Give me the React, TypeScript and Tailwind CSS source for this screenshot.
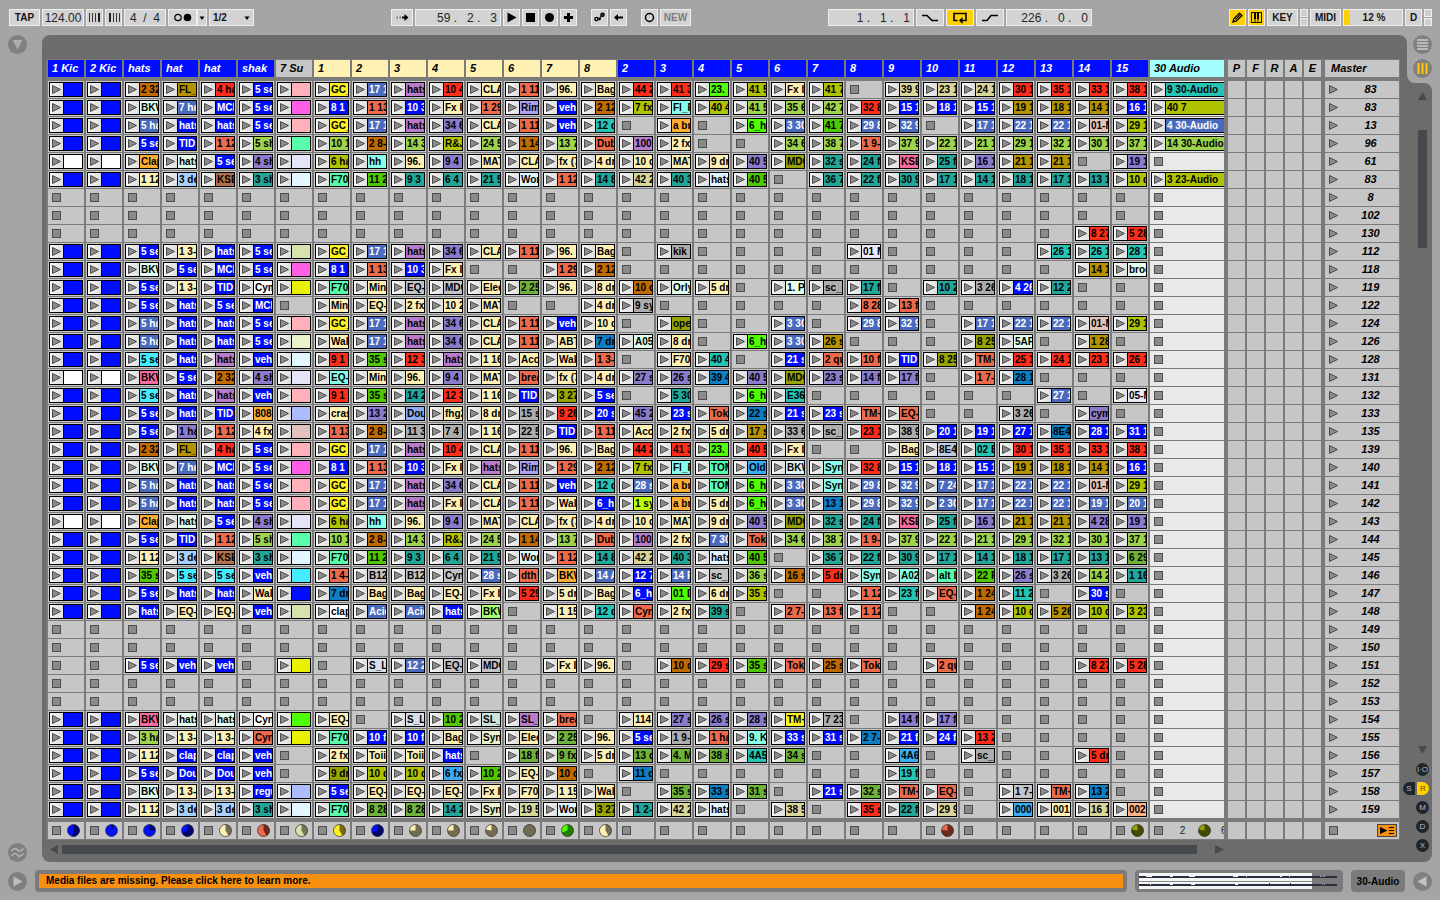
import React from "react";

const PALETTE: Record<string, string> = {
  bl: "bg-[#000dff] text-white",
  st: "bg-[#4a6bbd] text-white",
  or: "bg-[#bf6900] text-black",
  mu: "bg-[#b59200] text-black",
  re: "bg-[#ff2d19] text-black",
  mi: "bg-[#e3ffee] text-black",
  cm: "bg-[#ee6a4b] text-black",
  li: "bg-[#9dd44c] text-black",
  vi: "bg-[#8b7bcb] text-black",
  tl: "bg-[#22a699] text-black",
  cr: "bg-[#fff0b3] text-black",
  lb: "bg-[#a6d1ff] text-black",
  br: "bg-[#b0704a] text-black",
  am: "bg-[#ffae33] text-black",
  ye: "bg-[#fff01f] text-black",
  pu: "bg-[#b87cca] text-black",
  ol: "bg-[#b0c300] text-black",
  aq: "bg-[#87ffe9] text-black",
  gr: "bg-[#50c800] text-black",
  se: "bg-[#57ffad] text-black",
  pi: "bg-[#ffb0bb] text-black",
  mg: "bg-[#ff5fe4] text-black",
  lw: "bg-[#e4e6f8] text-black",
  lv: "bg-[#efe8fb] text-black",
  ic: "bg-[#e2f6ff] text-black",
  i2: "bg-[#dff0f2] text-black",
  tq: "bg-[#25c4b5] text-black",
  la: "bg-[#ad9ff0] text-black",
  dk: "bg-[#97a300] text-black",
  sa: "bg-[#d9d69c] text-black",
  gl: "bg-[#4dff00] text-black",
  gy: "bg-[#adadad] text-black",
  lg: "bg-[#c3c3c8] text-black",
  wh: "bg-white text-black",
  gn: "bg-[#6fb23a] text-black",
  hp: "bg-[#f76c9c] text-black",
  db: "bg-[#0d7dc4] text-black",
  rs: "bg-[#e1c3bb] text-black",
  yl: "bg-[#e8f200] text-black",
  pg: "bg-[#d7e3ad] text-black",
  p2: "bg-[#e8f3c9] text-black",
  pw: "bg-[#adbcff] text-black",
  cy: "bg-[#45ebff] text-black",
  du: "bg-[#8aacf0] text-black",
  sb: "bg-[#3aabf5] text-black",
  bg: "bg-[#bccbdf] text-black",
  yg: "bg-[#bfff0a] text-black",
  lm: "bg-[#a8ff70] text-black",
  ig: "bg-[#d5dfe8] text-black",
  sg: "bg-[#c9e3df] text-black",
  pe: "bg-[#ffb48a] text-black",
};

const EMPTY = Array(30).fill("-").join(",");

const SCENES: [string, string][] = [
  ["83", "bl,bl,or 2 32,mu FL_,re 4 ha,bl 5 se,pi,ye GC_,st 17 1,pu hats,re 10 4,cr CLA,cm 1 11,cr 96. I,cr Bag,re 44 2,re 41 3,gl 23. J,ol 41 5,cr Fx I,ol 41 7,-,sa 39 9,sa 23 1,sa 24 1,re 30 1,re 35 1,re 33 1,re 38 1,tq 9 30-Audio"],
  ["83", "bl,bl,mi BKW,st 7 ha,bl MCI,bl 5 se,mg,bl 8 1,cm 1 13,bl 10 3,cr Fx I,cm 1 29,la Rim,bl veh,or 2 12,ol 7 fx,aq Fl_F,ol 40 4,li 41 5,li 35 6,li 42 7,re 32 8,bl 15 1,bl 18 1,bl 15 1,mu 19 1,mu 18 1,mu 14 1,bl 16 1,ol 40 7"],
  ["13", "bl,bl,st 5 ha,bl hats,bl hats,bl 5 se,pi,ye GC_,st 17 1,pu hats,vi 34 6,cr CLA,cm 1 11,bl veh,tq 12 d,-,am a br,-,gl 6_h,st 3 30,gr 41 7,st 29 8,st 32 9,-,st 17 1,st 22 1,st 22 1,rs 01-M,ol 29 1,st 4 30-Audio"],
  ["96", "bl,bl,bl 5 se,bl TID,cm 1 12,li 5 sh,se,li 10 1,or 2 8-,li 14 3,ol R&J,li 24 5,or 1 14,li 13 7,cm Dub,pu 100,cr 2 fx,-,-,li 34 6,li 38 7,cm 1 9-,li 37 9,li 22 1,li 21 1,li 29 1,li 32 1,li 30 1,li 37 1,li 14 30-Audio"],
  ["61", "wh,wh,am Clap,mi hats,bl 5 se,vi 4 sh,lw,ol 6 ha,aq hh,cr 96.,vi 9 4,cr MAT,cr CLA,cr fx (7,cr 4 dr,cr 10 d,cr MAT,cr 9 dr,vi 40 5,dk MDC,tl 32 s,tl 24 f,hp KSE,tl 25 f,vi 16 1,mu 21 1,mu 21 1,-,vi 19 1,-"],
  ["83", "bl,bl,cr 1 12,lb 3 de,br KSE,tl 3 sh,ic,se F70,gr 11 2,tl 9 3,tl 6 4,tl 21 5,ic Wor,cm 1 12,tl 14 8,sa 42 2,tl 40 3,ic hats,gr 40 5,-,tl 36 7,tl 22 f,tl 30 9,tl 17 1,tl 14 1,tl 18 1,tl 17 1,tl 13 1,ol 10 d,ol 3 23-Audio"],
  ["8", EMPTY],
  ["102", EMPTY],
  ["130", "-,-,-,-,-,-,-,-,-,-,-,-,-,-,-,-,-,-,-,-,-,-,-,-,-,-,-,re 8 27,re 5 28,-"],
  ["112", "bl,bl,bl 5 se,cr 1 3-,bl hats,bl 5 se,pg,ye GC_,st 17 1,pu hats,vi 34 6,cr CLA,cm 1 11,cr 96. I,cr Bag,-,gy kik,-,-,-,-,lv 01 M,-,-,-,-,tq 26 1,tq 26 1,tq 28 1,-"],
  ["118", "bl,bl,mi BKW,bl 5 se,bl MCI,bl 5 se,mg,bl 8 1,cm 1 13,bl 10 3,cr Fx I,-,-,cm 1 29,or 2 12,-,-,-,-,-,-,-,-,-,-,-,-,mu 14 1,mi broo,-"],
  ["119", "bl,bl,bl 5 se,cr 1 3-,bl TID,wh Cym,yl,se F70,cr Min,lg EQ-,lg MDC,cr Elec,gn 2 25,cr 96. I,cr 8 dr,or 10 d,mi Orly,cr 5 dr,-,mi 1. P,gy sc_,tl 17 f,-,tl 10 2,gy 3 26,bl 4 26,tl 12 2,-,-,-"],
  ["122", "bl,bl,bl 5 se,bl hats,bl 5 se,bl MCI,-,cr Min,cr EQ-,cr 2 fx,cr 10 2,cr MAT,-,-,cr 4 dr,gy 9 sy,-,-,-,-,-,cm 8 28,cm 13 f,-,-,-,-,-,-,-"],
  ["124", "bl,bl,st 5 ha,bl hats,bl hats,bl 5 se,pi,ye GC_,st 17 1,pu hats,vi 34 6,cr CLA,cm 1 11,bl veh,cr 10 d,-,dk ope,-,-,st 3 30,-,st 29 8,st 32 9,-,st 17 1,st 22 1,st 22 1,rs 01-M,ol 29 1,-"],
  ["126", "bl,bl,st 5 ha,bl hats,bl hats,bl 5 se,p2,cr Wal,st 17 1,pu hats,vi 34 6,cr CLA,cm 1 11,cr ABT,db 7 dr,mi A05,cr 8 dr,-,gl 6_h,st 3 30,mu 26 s,-,-,-,dk 8 25,mi 5AF,-,mu 1 28,-,-"],
  ["128", "bl,bl,cy 5 se,bl hats,pu hats,bl veh,ic,re 9 1,gr 35 s,re 12 3,pu hats,cr 1 16,cr Aco,cr Wal,cm 1 3-,-,cr F70,tq 40 4,-,bl 21 s,cm 2 qu,cm 10 f,bl TID,dk 8 25,cm TM+,re 25 1,re 24 1,re 23 1,re 26 1,-"],
  ["131", "wh,wh,hp BKW,bl 5 se,or 2 32,vi 4 sh,lw,aq EQ-,cr Min,cr 96.,vi 9 4,cr MAT,cm brea,cr fx (7,cr 4 dr,vi 27 s,vi 26 s,db 39 4,vi 40 5,dk MDC,vi 23 s,vi 14 f,vi 17 f,-,cm 1 7-,db 28 1,-,-,-,-"],
  ["132", "bl,bl,cy 5 se,bl hats,pu hats,bl veh,pi,re 9 1,gr 35 s,tl 14 2,re 12 3,cr 1 16,bl TID,dk 3 27,bl 5 se,-,tl 5 30,-,gl 6_h,tq E36,-,-,-,-,-,-,st 27 1,-,lv 05-M,-"],
  ["133", "bl,bl,bl 5 se,bl hats,bl TID,am 808,pw,cr cras,vi 13 2,du Dou,cr fhg2,cr 8 dr,gy 15 s,re 9 26,bl 20 s,vi 45 2,bl 23 s,cm Tok,db 22 s,bl 21 s,bl 23 s,cm TM+,cm EQ-,-,-,gy 3 26,-,vi cym,-,-"],
  ["135", "bl,bl,bl 5 se,vi 1 ha,cm 1 12,cr 4 fx,rs,cm 1 13,or 2 8-,gy 11 3,gy 7 4,cr 1 16,gy 22 5,bl TID,cm 1 11,cr Aco,cr 2 fx,cr 5 dr,mu 17 s,gy 33 6,gy sc_,re 23 1,gy 38 9,bl 20 1,bl 19 1,bl 27 1,db 8E4,bl 28 1,bl 31 1,-"],
  ["139", "bl,bl,or 2 32,mu FL_,re 4 ha,bl 5 se,pi,ye GC_,st 17 1,pu hats,re 10 4,cr CLA,cm 1 11,cr 96. I,cr Bag,re 44 2,re 41 3,gl 23. J,re 40 5,cr Fx I,-,-,cr Bag,bg 8E4,tq 02 B,re 30 1,re 35 1,re 33 1,re 38 1,-"],
  ["140", "bl,bl,mi BKW,st 7 ha,bl MCI,bl 5 se,mg,bl 8 1,cm 1 13,bl 10 3,cr Fx I,pu hats,la Rim,cm 1 29,or 2 12,ol 7 fx,aq Fl_F,se TOM,sb Old,i2 BKW,aq Syn,re 32 8,bl 15 1,bl 18 1,bl 15 1,mu 19 1,mu 18 1,mu 14 1,bl 16 1,-"],
  ["141", "bl,bl,st 5 ha,bl hats,bl hats,bl 5 se,pi,ye GC_,st 17 1,pu hats,vi 34 6,cr CLA,cm 1 11,bl veh,tq 12 d,st 28 s,am a br,se TOM,gl 6_h,st 3 30,aq Syn,st 29 8,st 32 9,st 7 24,st 17 1,st 22 1,st 22 1,rs 01-M,ol 29 1,-"],
  ["142", "bl,bl,st 5 ha,bl hats,bl hats,bl 5 se,pi,ye GC_,st 17 1,pu hats,cr Fx I,cr CLA,cm 1 11,cr Wal,bl 6_h,yg 1 sy,am a br,cr 5 dr,gl 6_h,st 3 30,db 13 1,st 29 8,st 32 9,st 2 30,st 17 1,st 22 1,st 22 1,st 19 1,st 20 1,-"],
  ["143", "wh,wh,am Clap,mi hats,bl 5 se,vi 4 sh,lw,ol 6 ha,aq hh,cr 96.,vi 9 4,cr MAT,cr CLA,cr fx (7,cr 4 dr,cr 10 d,cr MAT,cr 9 dr,vi 40 5,dk MDC,tl 32 s,tl 24 f,hp KSE,tl 25 f,vi 16 1,mu 21 1,mu 21 1,vi 4 28,vi 19 1,-"],
  ["144", "bl,bl,bl 5 se,bl TID,cm 1 12,li 5 sh,se,li 10 1,or 2 8-,li 14 3,ol R&J,li 24 5,or 1 14,li 13 7,cm Dub,pu 100,cr 2 fx,st 7 30,cm Tok,li 34 6,li 38 7,cm 1 9-,li 37 9,li 22 1,li 21 1,li 29 1,li 32 1,li 30 1,li 37 1,-"],
  ["145", "bl,bl,cr 1 12,lb 3 de,br KSE,tl 3 sh,ic,se F70,gr 11 2,tl 9 3,tl 6 4,tl 21 5,ic Wor,cm 1 12,tl 14 8,sa 42 2,tl 40 3,ic hats,gr 40 5,-,tl 36 7,tl 22 f,tl 30 9,tl 17 1,tl 14 1,tl 18 1,tl 17 1,tl 13 1,gn 6 29,-"],
  ["146", "bl,bl,gr 35 s,cy 5 se,cy 5 se,bl veh,cy,cm 1 4-,lg B12,lg B12,lg Cyn,st 28 s,cm dth_,am BKW,st 14 A,bl 12 7,st 14 F,lg sc_,li 36 s,or 16 s,re 5 dr,aq Syn,aq A02,se alt b,gr 22 F,vi 26 s,gy 3 26,li 14 2,tl 1 16,-"],
  ["147", "bl,bl,bl 5 se,bl hats,bl hats,cr Wal,bl,db 7 dr,cr Bag,cr Bag,cr EQ-,cr Fx I,re 5 29,cr 5 dr,cr Bag,bl 6_h,gl 01 D,cr 6 dr,ol 35 s,-,-,cm 1 12,tq 23 f,cm EQ-,or 1 24,tq 11 2,-,bl 30 s,-,-"],
  ["148", "bl,bl,bl hats,cr EQ-,cr EQ-,bl veh,pg,wh clap,st Acid,st Acid,bl hats,lm BKW,-,cr 1 15,tq 12 d,cm Cyn,cr 2 fx,tl 39 s,-,cm 2 7-,cm 13 f,cm 1 12,-,-,or 1 24,ol 10 d,mu 5 26,ol 10 d,ol 3 23,-"],
  ["149", EMPTY],
  ["150", EMPTY],
  ["151", "-,-,bl 5 se,bl veh,bl veh,-,yl,-,ig S_L,st 12 2,lg EQ-,lg MDC,-,cr Fx I,cr 96. I,-,or 10 d,re 29 s,gr 35 s,cm Tok,or 25 s,cm Tok,-,cm 2 qu,-,-,-,re 8 27,re 5 28,-"],
  ["152", EMPTY],
  ["153", EMPTY],
  ["154", "bl,bl,hp BKW,mi hats,mi hats,wh Cyn,gl,cr EQ-,-,ig S_L,gr 10 2,sg SL_,pu SL_,cm brea,-,cr 114,vi 27 s,vi 26 s,vi 28 s,ye TM+,gy 7 23,-,vi 14 f,vi 17 f,-,-,-,-,-,-"],
  ["155", "bl,bl,li 3 ha,cr 1 3-,cr 1 3-,cm Cyn,yl,se F70,bl 10 f,bl 10 f,cr Bag,p2 Syn,cr Elec,gn 2 25,cr 96. I,bl 5 se,gy 1 9-,cm 1 ha,aq 9. K,bl 33 s,bl 31 s,db 2 7-,bl 21 f,bl 24 f,re 13 2,-,-,-,-,-"],
  ["156", "bl,bl,cr 1 12,bl clap,bl clap,bl veh,-,cr 2 fx,cr Toii,cr Toii,bl hats,-,gn 18 f,gn 9 fx,cr 5 dr,gn 13 d,gn 4. M,gn 38 s,tq 4A5,gn 34 s,-,-,sb 4A6,-,gy sc_,-,-,re 5 dr,-,-"],
  ["157", "bl,bl,bl 5 se,bl Dou,bl Dou,bl veh,-,dk 9 dr,ol 10 d,ol 10 d,sb 6 fx,gr 10 2,cr EQ-,or 10 d,-,db 11 d,-,-,-,-,-,-,tq 19 f,-,-,-,-,-,-,-"],
  ["158", "bl,bl,mi BKW,cr 1 3-,cr 1 3-,bl regu,pw,bl 5 se,cr EQ-,cr EQ-,cr EQ-,cr Fx I,cr F70,cr 1 15,cr Wal,-,gn 35 s,db 33 s,gn 31 s,-,bl 21 s,gn 32 s,cm TM+,cm EQ-,-,lg 1 7-,cm TM+,db 13 2,-,-"],
  ["159", "bl,bl,cr 1 12,lb 3 de,lb 3 de,tl 3 sh,ic,se F70,gn 8 28,gn 8 28,tl 14 2,p2 Syn,sa 19 5,ic Wor,dk 3 27,tl 1 2-,sa 42 2,ic hats,-,sa 38 5,-,re 35 s,tl 22 f,sa 29 9,-,sb 000,cr 001-,sa 16 1,pe 002,-"],
];

const GRID = SCENES.map(([, clips]) => clips.split(","));

type Knob = [bright: string, dark: string, elapsed: number];
type Track = { name: string; tone: string; knob?: Knob };

const BLUE = "bg-[#000dff] text-white";
const CREAM = "bg-[#fff0b3] text-black";

const TRACKS: Track[] = [
  { name: "1 Kic", tone: BLUE, knob: ["#0010ff", "#00066e", 190] },
  { name: "2 Kic", tone: BLUE, knob: ["#0010ff", "#00066e", 30] },
  { name: "hats", tone: BLUE, knob: ["#0010ff", "#00066e", 90] },
  { name: "hat", tone: BLUE, knob: ["#0010ff", "#00066e", 245] },
  { name: "hat", tone: BLUE, knob: ["#fff0b3", "#736c50", 150] },
  { name: "shak", tone: BLUE, knob: ["#ee6a4b", "#6d2a1c", 150] },
  { name: "7 Su", tone: "bg-[#c6c6c6] text-black", knob: ["#d7e3ad", "#6f7654", 150] },
  { name: "1", tone: CREAM, knob: ["#fff01f", "#75690c", 150] },
  { name: "2", tone: CREAM, knob: ["#0010ff", "#00066e", 250] },
  { name: "3", tone: CREAM, knob: ["#fff0b3", "#736c50", 270] },
  { name: "4", tone: CREAM, knob: ["#fff0b3", "#736c50", 270] },
  { name: "5", tone: CREAM, knob: ["#fff0b3", "#736c50", 280] },
  { name: "6", tone: CREAM, knob: ["#736c50", "#736c50", 180] },
  { name: "7", tone: CREAM, knob: ["#4dff00", "#257a04", 250] },
  { name: "8", tone: CREAM, knob: ["#fff0b3", "#736c50", 150] },
  { name: "2", tone: BLUE },
  { name: "3", tone: BLUE },
  { name: "4", tone: BLUE },
  { name: "5", tone: BLUE },
  { name: "6", tone: BLUE },
  { name: "7", tone: BLUE },
  { name: "8", tone: BLUE },
  { name: "9", tone: BLUE },
  { name: "10", tone: BLUE, knob: ["#ee6a4b", "#6d2a1c", 275] },
  { name: "11", tone: BLUE },
  { name: "12", tone: BLUE },
  { name: "13", tone: BLUE },
  { name: "14", tone: BLUE },
  { name: "15", tone: BLUE, knob: ["#97a300", "#444b00", 280] },
];

function PlayTriangle() {
  return (
    <svg width="9" height="9" viewBox="0 0 9 9" className="block shrink-0">
      <path d="M0.5 0.5 L8.5 4.5 L0.5 8.5 Z" fill="#8c8c8c" stroke="#4a4a4a" />
    </svg>
  );
}

function StopSquare({ label }: { label: string }) {
  return (
    <button
      type="button"
      aria-label={label}
      className="block size-[9px] shrink-0 border border-[#4d4d4d] bg-[#8a8a8a]"
    />
  );
}

function PieKnob({ knob }: { knob: Knob }) {
  const [bright, dark, elapsed] = knob;
  const rad = (elapsed * Math.PI) / 180;
  const x = 6.5 + 6 * Math.sin(rad);
  const y = 6.5 - 6 * Math.cos(rad);
  const large = elapsed > 180 ? 1 : 0;
  return (
    <svg width="13" height="13" viewBox="0 0 13 13" className="block shrink-0">
      <circle cx="6.5" cy="6.5" r="6" fill={bright} />
      <path d={`M6.5 6.5 V0.5 A6 6 0 ${large} 1 ${x} ${y} Z`} fill={dark} />
      <circle cx="6.5" cy="6.5" r="6" fill="none" stroke="#2c2c2c" strokeOpacity="0.7" />
    </svg>
  );
}

function Slot({ code, wide = false }: { code: string; wide?: boolean }) {
  if (code === "-") {
    return (
      <div className={`flex h-[17px] items-center px-1 ${wide ? "bg-[#e9e9e7]" : "bg-[#c6c6c6]"}`}>
        <StopSquare label="Stop track" />
      </div>
    );
  }
  const tone = PALETTE[code.slice(0, 2)];
  const name = code.slice(3);
  return (
    <div className={`h-[17px] py-px pl-px ${wide ? "bg-[#e9e9e7]" : "bg-[#c6c6c6] pr-px"}`}>
      <div className={`flex h-[15px] border-y border-l border-black ${wide ? "" : "border-r"}`}>
        <button
          type="button"
          aria-label="Launch clip"
          className="flex w-[14px] shrink-0 items-center border-r border-black bg-linear-to-r from-[#f8f8f8] to-[#dedede] pl-0.5"
        >
          <PlayTriangle />
        </button>
        <span className={`min-w-0 flex-1 overflow-hidden pl-px text-[10px] leading-[13px] font-bold whitespace-pre ${tone}`}>
          {name}
        </span>
      </div>
    </div>
  );
}

function ColumnHeader({ name, tone }: { name: string; tone: string }) {
  return (
    <div className={`mb-1 h-[17px] overflow-hidden pl-1 text-[11px] leading-[17px] font-bold whitespace-nowrap italic ${tone}`}>
      {name}
    </div>
  );
}

function TrackColumn({ track, index }: { track: Track; index: number }) {
  return (
    <div className="w-9 shrink-0">
      <ColumnHeader name={track.name} tone={track.tone} />
      <div className="flex flex-col gap-px">
        {GRID.map((row, i) => (
          <Slot key={i} code={row[index]} />
        ))}
      </div>
      <div className="mt-1 flex h-[17px] items-center gap-1.5 bg-[#c6c6c6] pl-1">
        <StopSquare label="Stop clips" />
        {track.knob && <PieKnob knob={track.knob} />}
      </div>
    </div>
  );
}

function AudioColumn() {
  return (
    <div className="min-w-0 flex-1 overflow-hidden">
      <ColumnHeader name="30 Audio" tone="bg-[#a3ffff] text-black" />
      <div className="flex flex-col gap-px">
        {GRID.map((row, i) => (
          <Slot key={i} code={row[29]} wide />
        ))}
      </div>
      <div className="mt-1 flex h-[17px] items-center bg-[#c6c6c6] pl-1 text-[10px] text-[#222]">
        <StopSquare label="Stop clips" />
        <span className="mr-1.5 ml-2.5 w-[19px] shrink-0 text-center">2</span>
        <PieKnob knob={["#97a300", "#444b00", 280]} />
        <span className="ml-2.5 shrink-0">6</span>
      </div>
    </div>
  );
}

function ReturnColumn({ name }: { name: string }) {
  return (
    <div className="w-[17px] shrink-0">
      <div className="mb-1 h-[17px] bg-[#c6c6c6] text-center text-[11px] leading-[17px] font-bold italic">{name}</div>
      <div className="flex flex-col gap-px">
        {SCENES.map((_, i) => (
          <div key={i} className="h-[17px] bg-[#c6c6c6]" />
        ))}
      </div>
      <div className="mt-1 h-[17px] bg-[#c6c6c6]" />
    </div>
  );
}

function MasterColumn() {
  return (
    <div className="w-[74px] shrink-0">
      <div className="mb-1 h-[17px] bg-[#c6c6c6] pl-1.5 text-[11px] leading-[17px] font-bold italic">Master</div>
      <div className="flex flex-col gap-px">
        {SCENES.map(([name], i) => (
          <button
            type="button"
            key={i}
            className="flex h-[17px] w-full items-center gap-1 bg-[#c6c6c6] pl-1 text-[11px] leading-[17px] font-bold italic"
          >
            <PlayTriangle />
            <span className="flex-1 text-center">{name}</span>
          </button>
        ))}
      </div>
      <div className="mt-1 flex h-[17px] items-center justify-between bg-[#c6c6c6] pr-0.5 pl-1">
        <StopSquare label="Stop all clips" />
        <button
          type="button"
          aria-label="Back to arrangement"
          className="flex h-[13px] w-5 items-center justify-center border border-[#444] bg-[#f78f11]"
        >
          <svg width="14" height="7" viewBox="0 0 14 7">
            <path d="M0 0 L7.5 3.5 L0 7 Z" fill="#000" />
            <path d="M9 0.5 H14 M9 3.5 H14 M9 6.5 H14" stroke="#000" />
          </svg>
        </button>
      </div>
    </div>
  );
}

function Box({
  label,
  className = "",
  tone = "border-[#efefef] bg-[#d3d3d3]",
  children,
}: {
  label?: string;
  className?: string;
  tone?: string;
  children?: React.ReactNode;
}) {
  return (
    <button
      type="button"
      aria-label={label}
      className={`flex h-[17px] shrink-0 items-center justify-center border text-[10px] leading-none font-bold text-[#151515] ${tone} ${className}`}
    >
      {children}
    </button>
  );
}

function Field({ label, value, className }: { label: string; value: string; className: string }) {
  return (
    <input
      type="text"
      aria-label={label}
      defaultValue={value}
      className={`h-[17px] shrink-0 border border-[#efefef] bg-[#d3d3d3] text-[12px] leading-[15px] text-[#262626] outline-none ${className}`}
    />
  );
}

function MiniPair() {
  return (
    <div className="flex w-2 shrink-0 flex-col gap-px">
      <span className="h-2 border border-[#efefef] bg-[#cfcfcf]" />
      <span className="h-2 border border-[#efefef] bg-[#cfcfcf]" />
    </div>
  );
}

function Toolbar() {
  return (
    <header className="flex h-[35px] items-center justify-between pr-2 pl-[9px]">
      <div className="flex gap-0.5">
        <Box className="w-[31px]">TAP</Box>
        <Field label="Tempo" value="124.00" className="w-[42px] text-center" />
        <Box label="Nudge down" className="w-[17px]">
          <svg width="12" height="9" viewBox="0 0 12 9">
            <path d="M0.5 0 V9 M3.5 0 V9 M6.5 0 V9" stroke="#333" />
            <path d="M10 0 V9" stroke="#222" strokeWidth="2" />
          </svg>
        </Box>
        <Box label="Nudge up" className="w-[17px]">
          <svg width="12" height="9" viewBox="0 0 12 9">
            <path d="M5.5 0 V9 M8.5 0 V9 M11.5 0 V9" stroke="#333" />
            <path d="M2 0 V9" stroke="#222" strokeWidth="2" />
          </svg>
        </Box>
        <Field label="Time signature" value="4  /  4" className="w-[42px] text-center" />
        <div className="flex">
          <Box label="Metronome" className="w-[29px]">
            <svg width="18" height="9" viewBox="0 0 18 9">
              <circle cx="4" cy="4.5" r="3.2" fill="none" stroke="#000" strokeWidth="1.2" />
              <circle cx="13.5" cy="4.5" r="3.8" fill="#000" />
            </svg>
          </Box>
          <Box label="Metronome options" className="w-[10px]">
            <svg width="6" height="4" viewBox="0 0 6 4">
              <path d="M0.5 0.5 H5.5 L3 4 Z" fill="#000" />
            </svg>
          </Box>
        </div>
        <div className="relative">
          <select
            aria-label="Quantization"
            className="block h-[17px] w-[45px] appearance-none border border-[#efefef] bg-[#d3d3d3] pl-[3px] text-[10px] leading-none font-bold text-[#151515] outline-none"
          >
            <option>1/2</option>
          </select>
          <svg width="6" height="4" viewBox="0 0 6 4" className="pointer-events-none absolute top-[7px] right-1">
            <path d="M0.5 0.5 H5.5 L3 4 Z" fill="#000" />
          </svg>
        </div>
      </div>

      <div className="flex gap-0.5">
        <Box label="Follow" className="w-[22px]">
          <svg width="13" height="7" viewBox="0 0 13 7">
            <path d="M0.5 3.5 H2 M3.5 3.5 H5" stroke="#777" strokeWidth="2" />
            <path d="M6 3.5 H10" stroke="#000" strokeWidth="2" />
            <path d="M8.5 0 L12.5 3.5 L8.5 7 Z" fill="#000" />
          </svg>
        </Box>
        <Field label="Arrangement position" value="59 .   2 .   3" className="w-[86px] pr-[3px] text-right" />
        <Box label="Play" className="w-[17px]">
          <svg width="10" height="11" viewBox="0 0 10 11">
            <path d="M0.5 0.5 L9.5 5.5 L0.5 10.5 Z" fill="#000" />
          </svg>
        </Box>
        <Box label="Stop" className="w-[17px]">
          <svg width="9" height="9" viewBox="0 0 9 9">
            <rect width="9" height="9" fill="#000" />
          </svg>
        </Box>
        <Box label="Record" className="w-[17px]">
          <svg width="9" height="9" viewBox="0 0 9 9">
            <circle cx="4.5" cy="4.5" r="4.5" fill="#000" />
          </svg>
        </Box>
        <Box label="Overdub" className="w-[17px]">
          <svg width="9" height="9" viewBox="0 0 9 9">
            <path d="M4.5 0 V9 M0 4.5 H9" stroke="#000" strokeWidth="3" />
          </svg>
        </Box>
        <Box label="Automation arm" className="ml-3 w-[17px]">
          <svg width="11" height="11" viewBox="0 0 11 11">
            <path d="M3 7 L5.5 6.5 L8 3" fill="none" stroke="#000" strokeWidth="1.1" />
            <circle cx="2.5" cy="7" r="1.6" fill="#d3d3d3" stroke="#000" strokeWidth="1.4" />
            <circle cx="8.5" cy="2.8" r="1.6" fill="#555" stroke="#000" strokeWidth="1.4" />
            <circle cx="5.6" cy="7" r="1.3" fill="#000" />
          </svg>
        </Box>
        <Box label="Re-enable automation" className="w-[17px]">
          <svg width="9" height="7" viewBox="0 0 9 7">
            <path d="M4 0 L0 3.5 L4 7 Z" fill="#000" />
            <path d="M2 3.5 H9" stroke="#000" strokeWidth="2" />
          </svg>
        </Box>
        <Box label="Session record" className="ml-3 w-[17px]">
          <svg width="11" height="11" viewBox="0 0 11 11">
            <circle cx="5.5" cy="5.5" r="4" fill="none" stroke="#000" strokeWidth="1.5" />
          </svg>
        </Box>
        <Box className="w-[31px]">
          <span className="text-[#7d7d7d]">NEW</span>
        </Box>
      </div>

      <div className="flex gap-0.5">
        <Field label="Loop start" value="1 .   1 .   1" className="w-[86px] pr-[3px] text-right" />
        <Box label="Punch in" className="w-7">
          <svg width="16" height="8" viewBox="0 0 16 8">
            <path d="M0 1.5 H5 L10 6.5 H16" fill="none" stroke="#000" strokeWidth="1.6" />
          </svg>
        </Box>
        <Box label="Loop" className="w-7" tone="border-[#efefef] bg-[#ffd000]">
          <svg width="14" height="12" viewBox="0 0 14 12">
            <path d="M4.5 8.5 H1 V1.5 H13 V8.5 H8" fill="none" stroke="#000" strokeWidth="1.6" />
            <path d="M9.5 5 L6 8.5 L9.5 12 Z" fill="#000" />
          </svg>
        </Box>
        <Box label="Punch out" className="w-7">
          <svg width="16" height="8" viewBox="0 0 16 8">
            <path d="M0 6.5 H5 L9 1.5 H16" fill="none" stroke="#000" strokeWidth="1.6" />
          </svg>
        </Box>
        <Field label="Loop length" value="226 .   0 .   0" className="w-[86px] pr-[3px] text-right" />
      </div>

      <div className="flex gap-0.5">
        <Box label="Draw mode" className="w-[17px]" tone="border-[#efefef] bg-[#ffd000]">
          <svg width="11" height="11" viewBox="0 0 11 11">
            <path d="M1 10 L1.8 6.8 L7.5 1 L10 3.5 L4.2 9.2 Z" fill="#ffd000" stroke="#000" strokeWidth="1.2" />
            <path d="M3.5 7.5 L8.3 2.7" stroke="#000" strokeWidth="1.2" />
            <path d="M0.5 10.5 L1.4 7.5 L3.5 9.6 Z" fill="#000" />
          </svg>
        </Box>
        <Box label="Computer MIDI keyboard" className="w-[17px]" tone="border-[#efefef] bg-[#ffd000]">
          <svg width="11" height="11" viewBox="0 0 11 11">
            <path d="M0.5 0 V11 M10.5 0 V11 M4 6 V11 M7 6 V11 M0 10.5 H11 M0 0.5 H11" stroke="#000" strokeWidth="0.9" />
            <path d="M4 0 V7 M7 0 V7" stroke="#000" strokeWidth="2" />
          </svg>
        </Box>
        <Box className="w-[31px]">KEY</Box>
        <MiniPair />
        <Box className="w-[31px]">MIDI</Box>
        <div className="flex h-[17px] w-[60px] shrink-0 border border-[#efefef] bg-[#d3d3d3] text-[10px] leading-[15px] font-bold text-[#151515]">
          <span className="w-1.5 shrink-0 bg-[#ffd000]" />
          <span className="flex-1 pr-1 text-center">12 %</span>
        </div>
        <Box className="w-[17px]">D</Box>
        <MiniPair />
      </div>
    </header>
  );
}

function RoundButton({ label, children }: { label: string; children: React.ReactNode }) {
  return (
    <button type="button" aria-label={label} className="flex size-[19px] shrink-0 items-center justify-center rounded-full bg-[#808080]">
      {children}
    </button>
  );
}

function Dot({ children }: { children: React.ReactNode }) {
  return (
    <button
      type="button"
      className="flex size-[13px] items-center justify-center rounded-full bg-[#20242c] text-[8px] leading-none text-[#b4bac2]"
    >
      {children}
    </button>
  );
}

function SideRail() {
  return (
    <div className="flex w-[25px] shrink-0 flex-col">
      <div className="shrink-0 bg-[#6c6c6c]">
        <div className="flex h-12 flex-col items-end gap-[5px] rounded-bl-lg bg-[#a5a5a5]">
          <RoundButton label="Arrangement view">
            <svg width="11" height="11" viewBox="0 0 11 11">
              <path d="M0 1 H11 M0 4 H11 M0 7 H11 M0 10 H11" stroke="#b8b8b8" strokeWidth="2" />
            </svg>
          </RoundButton>
          <RoundButton label="Session view">
            <svg width="11" height="11" viewBox="0 0 11 11">
              <path d="M1.5 0 V11 M5.5 0 V11 M9.5 0 V11" stroke="#ffc800" strokeWidth="2" />
            </svg>
          </RoundButton>
        </div>
      </div>
      <div className="flex flex-1 flex-col items-center rounded-tr-lg rounded-br-lg bg-[#6c6c6c] pt-[9px] pl-1.5">
        <svg width="9" height="8" viewBox="0 0 9 8" className="shrink-0">
          <path d="M0 8 L4.5 0 L9 8 Z" fill="#46494d" />
        </svg>
        <div className="mt-[30px] h-[118px] w-[9px] bg-[#46494d]" />
        <div className="flex-1" />
        <svg width="9" height="8" viewBox="0 0 9 8" className="shrink-0">
          <path d="M0 0 L4.5 8 L9 0 Z" fill="#46494d" />
        </svg>
        <div className="mt-[9px] mb-2.5 flex flex-col items-center gap-1.5">
          <Dot>I·O</Dot>
          <div className="flex w-[13px] justify-end gap-0.5">
            <button
              type="button"
              className="flex h-[13px] w-3 shrink-0 items-center justify-center rounded-l-full bg-[#20242c] text-[8px] leading-none text-[#b4bac2]"
            >
              S
            </button>
            <button
              type="button"
              className="flex h-[13px] w-3 shrink-0 items-center justify-center rounded-r-full bg-[#ffd000] text-[8px] leading-none text-[#5e5000]"
            >
              R
            </button>
          </div>
          <Dot>M</Dot>
          <Dot>D</Dot>
          <Dot>X</Dot>
        </div>
      </div>
    </div>
  );
}

function StatusBar() {
  return (
    <footer className="flex h-[38px] items-center gap-2 px-2">
      <RoundButton label="Show clip view">
        <svg width="11" height="11" viewBox="0 0 11 11">
          <path d="M1.5 0.5 L10.5 5.5 L1.5 10.5 Z" fill="#bdbdbd" />
        </svg>
      </RoundButton>
      <div className="h-[22px] min-w-0 flex-1 rounded bg-[#7b7b7b] p-1">
        <a
          href="#missing-files"
          className="block h-[14px] overflow-hidden bg-[#f78f11] pl-[7px] text-[10px] leading-[14px] font-bold whitespace-nowrap text-black"
        >
          Media files are missing. Please click here to learn more.
        </a>
      </div>
      <div className="h-[22px] w-[208px] shrink-0 rounded bg-[#7b7b7b] px-1 py-[3px]">
        <svg width="200" height="16" viewBox="0 0 200 16" className="block">
          <rect width="173" height="16" fill="#f2f5f4" />
          <path d="M0 4 H198 M0 12 H198" stroke="#2a2c40" strokeWidth="2" />
          <path d="M0 8.5 H173" stroke="#8a8a8a" />
          <path d="M7 3.5 H13 M31 3.5 H34 M50 3.5 H56 M94 3.5 H99 M107 3.5 H108 M141 3.5 H143 M150 3.5 H151" stroke="#f2f5f4" />
          <path d="M11 11.5 H12 M31 11.5 H34 M52 11.5 H56 M96 11.5 H99" stroke="#f2f5f4" />
          <path d="M130 10.5 H131 M151 10.5 H152" stroke="#2a2c40" />
          <path d="M181 3.5 H183 M184 3.5 H186 M183 11.5 H184 M185 11.5 H186" stroke="#9a9a9a" />
        </svg>
      </div>
      <div className="flex h-[22px] w-[54px] shrink-0 items-center justify-center rounded bg-[#7b7b7b] text-[10px] font-bold text-black">
        30-Audio
      </div>
      <RoundButton label="Show device view">
        <svg width="11" height="11" viewBox="0 0 11 11">
          <path d="M9.5 0.5 L0.5 5.5 L9.5 10.5 Z" fill="#c4c4c4" />
        </svg>
      </RoundButton>
    </footer>
  );
}

export default function App() {
  return (
    <div className="flex min-h-screen flex-col bg-[#a5a5a5] font-['Liberation_Sans',Arial,sans-serif] text-black">
      <Toolbar />
      <div className="flex flex-1 pr-2">
        <div className="flex w-[42px] shrink-0 flex-col justify-between pl-2">
          <RoundButton label="Show browser">
            <svg width="11" height="11" viewBox="0 0 11 11">
              <path d="M0.5 1 L10.5 1 L5.5 10.5 Z" fill="#adadad" />
            </svg>
          </RoundButton>
          <RoundButton label="Groove pool">
            <svg width="13" height="11" viewBox="0 0 13 11">
              <path
                d="M0.5 4 C3 0.5 5 1 6.5 3 S10 4.5 12.5 1.5 M0.5 9 C3 5.5 5 6 6.5 8 S10 9.5 12.5 6.5"
                fill="none"
                stroke="#b5b5b5"
                strokeWidth="1.5"
              />
            </svg>
          </RoundButton>
        </div>

        <main className="flex min-w-0 flex-1 flex-col rounded-l-lg rounded-tr-lg bg-[#6c6c6c] pt-6 pr-[7px] pl-1">
          <div className="flex gap-1 border-t border-[#7b7b7b] bg-[#7b7b7b] pr-px pb-px pl-0.5">
            <div className="flex min-w-0 flex-1 gap-0.5 overflow-hidden">
              {TRACKS.map((track, i) => (
                <TrackColumn key={i} track={track} index={i} />
              ))}
              <AudioColumn />
            </div>
            <div className="flex shrink-0 gap-0.5">
              {["P", "F", "R", "A", "E"].map((name) => (
                <ReturnColumn key={name} name={name} />
              ))}
            </div>
            <MasterColumn />
          </div>
          <div className="mt-[5px] mb-2 flex items-center gap-1 pr-[176px] pl-1">
            <svg width="8" height="9" viewBox="0 0 8 9" className="shrink-0">
              <path d="M8 0 L0 4.5 L8 9 Z" fill="#46494d" />
            </svg>
            <div className="mr-[14px] h-[9px] min-w-0 flex-1 bg-[#46494d]" />
            <svg width="9" height="9" viewBox="0 0 9 9" className="shrink-0">
              <path d="M0 0 L9 4.5 L0 9 Z" fill="#46494d" />
            </svg>
          </div>
        </main>
        <SideRail />
      </div>
      <StatusBar />
    </div>
  );
}
